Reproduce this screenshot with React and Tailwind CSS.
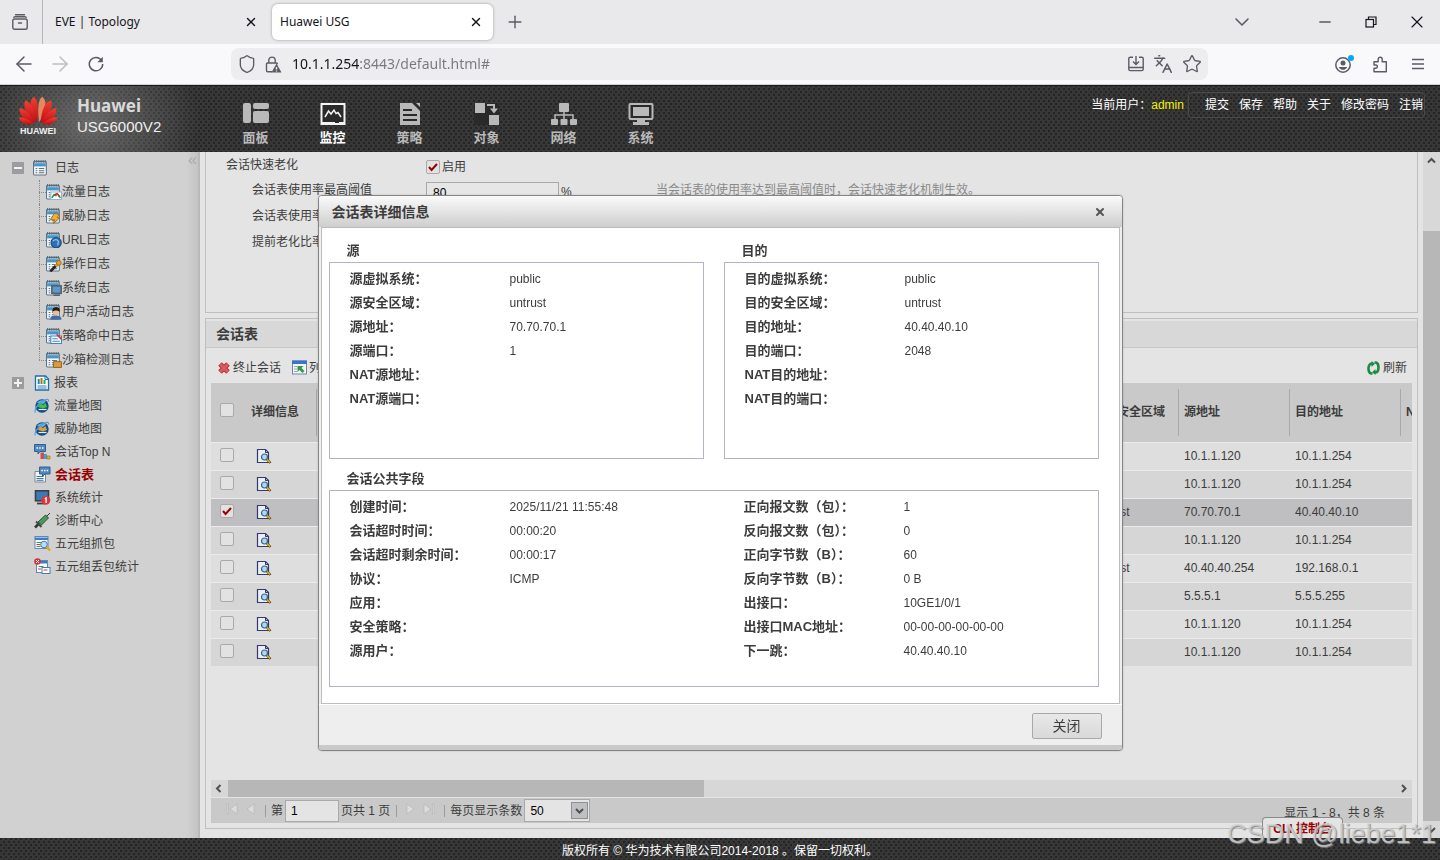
/**
 * App.jsx
 * Huawei USG - tabela de sessões com o diálogo de detalhes aberto.
 */
import { useState } from 'react'
import { clsx } from 'clsx'
import {
  ArrowLeft, ArrowRight, ChevronDown, Languages, Menu, Minus, Plus, Shield, Star, X,
} from 'lucide-react'

const DOTS =
  'bg-[#373738] bg-[radial-gradient(circle_at_1px_1px,#242425_1px,transparent_1px),radial-gradient(circle_at_4px_4px,#242425_1px,transparent_1px)] bg-[length:5px_6px]'

const LOG_ITEMS = [
  { label: '流量日志', mark: 'traffic' },
  { label: '威胁日志', mark: 'threat' },
  { label: 'URL日志', mark: 'url' },
  { label: '操作日志', mark: 'tool' },
  { label: '系统日志', mark: 'system' },
  { label: '用户活动日志', mark: 'user' },
  { label: '策略命中日志', mark: 'policy' },
  { label: '沙箱检测日志', mark: 'sandbox' },
]

const MONITOR_ITEMS = [
  { label: '流量地图', Icon: () => <GlobeIcon mark="#3fc43f" /> },
  { label: '威胁地图', Icon: () => <GlobeIcon mark="#e0a030" /> },
  { label: '会话Top N', Icon: TopNIcon },
  { label: '会话表', Icon: SessionIcon, active: true },
  { label: '系统统计', Icon: SysStatIcon },
  { label: '诊断中心', Icon: SyringeIcon },
  { label: '五元组抓包', Icon: CaptureIcon },
  { label: '五元组丢包统计', Icon: DropIcon },
]

const NAV = [
  { label: '面板', Icon: PanelIcon },
  { label: '监控', Icon: MonitorIcon, active: true },
  { label: '策略', Icon: PolicyIcon },
  { label: '对象', Icon: ObjectIcon },
  { label: '网络', Icon: NetworkIcon },
  { label: '系统', Icon: SystemIcon },
]

const SESSIONS = [
  { src: '10.1.1.120', dst: '10.1.1.254' },
  { src: '10.1.1.120', dst: '10.1.1.254' },
  { zone: 'untrust', src: '70.70.70.1', dst: '40.40.40.10', selected: true },
  { src: '10.1.1.120', dst: '10.1.1.254' },
  { zone: 'untrust', src: '40.40.40.254', dst: '192.168.0.1' },
  { src: '5.5.5.1', dst: '5.5.5.255' },
  { src: '10.1.1.120', dst: '10.1.1.254' },
  { src: '10.1.1.120', dst: '10.1.1.254' },
]

const SOURCE = [
  ['源虚拟系统：', 'public'],
  ['源安全区域：', 'untrust'],
  ['源地址：', '70.70.70.1'],
  ['源端口：', '1'],
  ['NAT源地址：', ''],
  ['NAT源端口：', ''],
]

const DESTINATION = [
  ['目的虚拟系统：', 'public'],
  ['目的安全区域：', 'untrust'],
  ['目的地址：', '40.40.40.10'],
  ['目的端口：', '2048'],
  ['NAT目的地址：', ''],
  ['NAT目的端口：', ''],
]

const COMMON_LEFT = [
  ['创建时间：', '2025/11/21 11:55:48'],
  ['会话超时时间：', '00:00:20'],
  ['会话超时剩余时间：', '00:00:17'],
  ['协议：', 'ICMP'],
  ['应用：', ''],
  ['安全策略：', ''],
  ['源用户：', ''],
]

const COMMON_RIGHT = [
  ['正向报文数（包）：', '1'],
  ['反向报文数（包）：', '0'],
  ['正向字节数（B）：', '60'],
  ['反向字节数（B）：', '0 B'],
  ['出接口：', '10GE1/0/1'],
  ['出接口MAC地址：', '00-00-00-00-00-00'],
  ['下一跳：', '40.40.40.10'],
]

export default function App() {
  const [open, setOpen] = useState(true)

  return (
    <div className="flex h-screen flex-col overflow-hidden bg-[#e4e4e4] font-['Liberation_Sans','Noto_Sans_CJK_SC',sans-serif] text-xs text-[#3c3c3c]">
      <TabBar />
      <AddressBar />
      <Header />
      <div className="flex min-h-0 flex-1">
        <Sidebar />
        <main className="flex min-w-0 flex-1 flex-col gap-[5px] px-[5px] pb-[9px]">
          <AgingPanel />
          <SessionPanel />
        </main>
        <PageScrollbar />
      </div>
      <footer className={clsx('relative flex h-[22px] shrink-0 items-center justify-center pt-1 text-white', DOTS)}>
        版权所有 © 华为技术有限公司2014-2018 。保留一切权利。
        <button className="absolute right-[97px] bottom-full h-[21px] rounded-t border border-b-0 border-[#8a8a8a] bg-[#e4e4e4] px-2.5 pt-0.5 font-bold text-[#990000]">
          CLI 控制台
        </button>
        <span className="absolute right-1 bottom-[10px] text-[27px] leading-8 whitespace-nowrap text-[#d4d4d4]/80 [text-shadow:1px_1px_1px_#888]">
          CSDN @liebe1*1
        </span>
      </footer>
      {open && <SessionDialog onClose={() => setOpen(false)} />}
    </div>
  )
}

/* ---------- Navegador ---------- */

function TabBar() {
  return (
    <div className="flex h-11 shrink-0 items-center bg-[#e9e9eb] font-['Noto_Sans','Noto_Sans_CJK_SC',sans-serif] text-[#15141a]">
      <button className="flex h-full w-[43px] items-center justify-center border-r border-[#b5b5b8] pr-0.5" aria-label="View">
        <svg width="16" height="16" viewBox="0 0 16 16" fill="none" stroke="#5b5b66" strokeWidth="1.4" strokeLinecap="round">
          <path d="M3.5 .8h9M1.800 3.200c.5-.4 1-.5 1.700-.5h9c.7 0 1.200.1 1.700.5" />
          <rect x=".8" y="5" width="14.400" height="10.200" rx="1.800" />
          <path d="M6.500 9h3" />
        </svg>
      </button>
      <div className="flex w-[229px] items-center justify-between pr-3.5 pl-3">
        <span>EVE | Topology</span>
        <button aria-label="Close"><X size={14} strokeWidth={2.4} /></button>
      </div>
      <div className="flex h-9 w-[221px] items-center justify-between rounded-md bg-white pr-2.5 pl-2 shadow-[0_0_3px_rgba(0,0,0,0.35)]">
        <span>Huawei USG</span>
        <button aria-label="Close"><X size={14} strokeWidth={2.4} /></button>
      </div>
      <button className="ml-3 text-[#5b5b66]" aria-label="New"><Plus size={20} strokeWidth={1.7} /></button>
      <div className="ml-auto flex items-center pr-[13px]">
        <button className="mr-[62px] text-[#5b5b66]" aria-label="List"><ChevronDown size={24} strokeWidth={1.6} /></button>
        <button className="mr-[31px]" aria-label="Minimize"><Minus size={18} strokeWidth={1.5} /></button>
        <button className="mr-[30px]" aria-label="Restore">
          <svg width="12" height="12" viewBox="0 0 12 12" fill="none" stroke="#15141a" strokeWidth="1.200">
            <rect x="1" y="3.500" width="7.500" height="7.500" />
            <path d="M3.500 3.500V1H11v7.500H8.500" />
          </svg>
        </button>
        <button aria-label="Exit"><X size={20} strokeWidth={1.400} /></button>
      </div>
    </div>
  )
}

function AddressBar() {
  const [url, setUrl] = useState('10.1.1.254:8443/default.html#')

  return (
    <div className="flex h-[41px] shrink-0 items-center border-b border-[#cfd0d3] bg-[#f9f9fb] pl-3 text-[#5b5b66]">
      <button className="mr-3" aria-label="Back"><ArrowLeft size={24} strokeWidth={1.500} /></button>
      <button className="mr-4 text-[#bdbdc2]" aria-label="Forward"><ArrowRight size={24} strokeWidth={1.500} /></button>
      <button aria-label="Reload">
        <svg width="16" height="16" viewBox="0 0 16 16" fill="none" stroke="currentColor" strokeWidth="1.500">
          <path d="M13.600 4.400A6.700 6.700 0 1 0 14.700 8" />
          <path d="M14.800.8v5.400H9.400z" fill="currentColor" stroke="none" />
        </svg>
      </button>
      <div className="ml-[127px] flex h-8 min-w-0 flex-1 items-center rounded-lg bg-[#ededf0] px-1.5">
        <Shield size={20} strokeWidth={1.600} />
        <svg className="ml-2" width="17" height="17" viewBox="0 0 17 17" fill="none" stroke="currentColor" strokeWidth="1.400">
          <path d="M3.800 7V4.300a3.200 3.200 0 0 1 6.400 0V7M12.500 8.200c0-.7-.5-1.200-1.200-1.200H2.700c-.7 0-1.200.5-1.200 1.200v6.300c0 .7.5 1.200 1.200 1.200H7" />
          <path d="M11.500 7.500l5 9h-10z" fill="currentColor" stroke="none" />
          <path d="M11.500 11v2.600M11.500 14.400v1" stroke="#ededf0" />
        </svg>
        {/* host escuro, resto do endereço cinza */}
        <input
          aria-label="URL"
          value={url}
          onChange={(e) => setUrl(e.target.value)}
          className="ml-2.5 min-w-0 flex-1 bg-linear-to-r from-[#15141a] from-[68px] to-[#77777d] to-[68px] bg-clip-text font-['Noto_Sans',sans-serif] text-sm text-transparent outline-none"
        />
        <div className="flex items-center gap-[9px]">
          <svg width="16" height="16" viewBox="0 0 16 16" fill="none" stroke="currentColor" strokeWidth="1.400">
            <path d="M5 1.200H2.200C1.400 1.200.8 1.800.8 2.600v10.600c0 .8.600 1.400 1.400 1.400h11.600c.8 0 1.400-.6 1.400-1.400V2.600c0-.8-.6-1.400-1.400-1.400H11M.8 11.500h14.400M8 0v8M5 5.400l3 3 3-3" />
          </svg>
          <Languages size={20} strokeWidth={1.800} />
          <Star size={20} strokeWidth={1.600} />
        </div>
      </div>
      <div className="flex items-center gap-[18px] pr-2.5 pl-[127px]">
        <svg width="20" height="18" viewBox="0 0 20 18" fill="none">
          <circle cx="8" cy="10" r="7.200" stroke="#5b5b66" strokeWidth="1.500" />
          <circle cx="8" cy="8" r="2.500" fill="#5b5b66" />
          <path d="M3.800 12h8.400c-.8 1.900-2.300 2.800-4.200 2.800S4.600 13.900 3.800 12z" fill="#5b5b66" />
          <circle cx="16" cy="3" r="3" fill="#00a8ff" />
        </svg>
        <svg width="15" height="17" viewBox="0 0 15 17" fill="none" stroke="#5b5b66" strokeWidth="1.400" strokeLinejoin="round">
          <path d="M1 5.800h4.200V3.200a2 2 0 0 1 4 0v2.600h4.100v10H1v-3.600h1.800a1.600 1.600 0 0 0 0-3.200H1z" />
        </svg>
        <svg width="24" height="16" viewBox="0 0 24 16" stroke="#5b5b66" strokeWidth="1.300">
          <path d="M6 3.500h12M6 8h12M6 12.500h12" />
        </svg>
      </div>
    </div>
  )
}

/* ---------- Cabeçalho ---------- */

function Header() {
  return (
    <header className={clsx('shrink-0', DOTS)}>
      <div className="flex h-[67px] items-start border-t border-[#1b1b1c] bg-[radial-gradient(ellipse_110px_90px_at_90px_36px,rgba(160,160,160,0.5),transparent)]">
        <HuaweiLogo />
        <div className="ml-[18px] w-[140px] pt-[9px]">
          <div className="font-['Noto_Sans',sans-serif] text-[17px] leading-[22px] font-bold text-[#d9d9d9]">Huawei</div>
          <div className="text-[15px] leading-5 text-[#efefef]">USG6000V2</div>
        </div>
        <nav className="flex">
          {NAV.map(({ label, Icon, active }) => (
            <a
              key={label}
              href="#"
              className={clsx(
                'flex w-[77px] flex-col items-center pt-4 text-[13px] font-bold',
                active ? 'text-white' : 'text-[#b9b9b9]'
              )}
            >
              <Icon />
              <span className="mt-0.5 leading-5">{label}</span>
            </a>
          ))}
        </nav>
        <div className="mt-1.5 mr-[15px] ml-auto flex h-[26px] items-center text-white">
          <span>当前用户：</span>
          <span className="mr-1 text-[#f0f000]">admin</span>
          <div className="flex h-full items-center gap-2.5 rounded-sm border border-[#4a4a4b] pr-px pl-4">
            {['提交', '保存', '帮助', '关于', '修改密码', '注销'].map((item) => (
              <a key={item} href="#">{item}</a>
            ))}
          </div>
        </div>
      </div>
    </header>
  )
}

function HuaweiLogo() {
  return (
    <div className="ml-[17px] flex w-[42px] flex-col items-center pt-2.5">
      <svg width="40" height="29" viewBox="0 0 40 29">
        <defs>
          <linearGradient id="petal" x1="0" y1="0" x2="0" y2="1">
            <stop offset="0" stopColor="#f04030" />
            <stop offset="1" stopColor="#c00d18" />
          </linearGradient>
        </defs>
        <g fill="url(#petal)">
          <path d="M19 26C12 17 10 6 15.500.8 20 2 20.500 14 19 26z" />
          <path d="M21 26C28 17 30 6 24.500.8 20 2 19.500 14 21 26z" fill="#e8865c" />
          <path d="M17.500 26.500C9 21 4.500 11.500 7 4.600 13 5 16.500 15 17.500 26.500z" />
          <path d="M22.500 26.500C31 21 35.500 11.500 33 4.600 27 5 23.500 15 22.500 26.500z" />
          <path d="M16.500 27C8 26 1 20.500 1.500 12 8 13 13.500 19.500 16.500 27z" />
          <path d="M23.500 27C32 26 39 20.500 38.500 12 32 13 26.500 19.500 23.500 27z" />
          <path d="M15.500 27.800C8 30 3 27.500.5 21.500 6.500 21 11 23.500 15.500 27.800z" />
          <path d="M24.500 27.800C32 30 37 27.500 39.500 21.500 33.500 21 29 23.500 24.500 27.800z" />
        </g>
      </svg>
      <span className="text-[9px] leading-3 font-bold text-[#eee]">HUAWEI</span>
    </div>
  )
}

function PanelIcon() {
  return (
    <svg width="26" height="24" viewBox="0 0 26 24" fill="#b9b9b9">
      <rect y="1" width="8" height="20" rx="2" />
      <rect x="10" y="1" width="16" height="6" rx="2" />
      <rect x="10" y="9" width="16" height="12" rx="2" />
    </svg>
  )
}

function MonitorIcon() {
  return (
    <svg width="26" height="24" viewBox="0 0 26 24">
      <rect x="1.500" y="2" width="23" height="20" fill="#2a2a2b" stroke="#f4f4f4" strokeWidth="2" />
      <path d="M1 20h14v1.500h4V20h6v3H1z" fill="#f4f4f4" />
      <path d="M5 15l3.500-6 2.500 3 3-4 2 3.500 2-1 3 4.500" fill="none" stroke="#f4f4f4" strokeWidth="1.500" />
    </svg>
  )
}

function PolicyIcon() {
  return (
    <svg width="22" height="24" viewBox="0 0 22 24">
      <path d="M1 1h12l8 8v14H1z" fill="#b9b9b9" />
      <path d="M14.500 1H21v6.500z" fill="#2a2a2b" />
      <path d="M17 1h4v4z" fill="#b9b9b9" />
      <path d="M4 8h9M4 13h14M4 18h14" stroke="#2a2a2b" strokeWidth="2" />
    </svg>
  )
}

function ObjectIcon() {
  return (
    <svg width="25" height="24" viewBox="0 0 25 24">
      <rect y="1" width="25" height="22" fill="#2a2a2b" />
      <path d="M1 1h10v10H1zM15 13h10v10H15z" fill="#b9b9b9" />
      <path d="M13 3h7v5" fill="none" stroke="#b9b9b9" strokeWidth="2" />
      <path d="M16 6.500h8l-4 5z" fill="#b9b9b9" />
    </svg>
  )
}

function NetworkIcon() {
  return (
    <svg width="26" height="24" viewBox="0 0 26 24">
      <path d="M13 9v8M4 17v-4h18v4" fill="none" stroke="#b9b9b9" strokeWidth="1.500" />
      <g fill="#b9b9b9">
        <rect x="8" y="1" width="10" height="9" rx="1" />
        <rect y="17" width="7" height="6" rx="1" />
        <rect x="9.500" y="17" width="7" height="6" rx="1" />
        <rect x="19" y="17" width="7" height="6" rx="1" />
      </g>
    </svg>
  )
}

function SystemIcon() {
  return (
    <svg width="26" height="24" viewBox="0 0 26 24">
      <rect x="1.500" y="2" width="23" height="15" rx="1" fill="#2a2a2b" stroke="#b9b9b9" strokeWidth="2" />
      <rect x="5" y="5" width="16" height="9" fill="#b9b9b9" />
      <path d="M9 17h8v3h4v3H5v-3h4z" fill="#b9b9b9" />
    </svg>
  )
}

/* ---------- Menu lateral ---------- */

function Sidebar() {
  return (
    <aside className="relative w-[200px] shrink-0 border-r-2 border-[#b9b9b9] bg-linear-to-r from-[#d1d1d1] from-94% to-[#c4c4c4] pt-1">
      <button className="absolute top-0 right-0 px-px text-base leading-4 text-[#aaa]" aria-label="Collapse">«</button>
      <div className="flex h-6 items-center pl-3">
        <Toggle open />
        <span className="ml-[9px]"><LogIcon /></span>
        <a href="#" className="ml-1.5">日志</a>
      </div>
      <ul className="ml-[39px]">
        {LOG_ITEMS.map(({ label, mark }, i) => (
          <li key={label} className="relative flex h-6 items-center">
            <span
              className={clsx(
                'absolute top-0 left-0 w-[7px] border-l border-dotted border-[#888]',
                i === LOG_ITEMS.length - 1 ? 'h-3' : 'h-6'
              )}
            />
            <span className="w-[7px] border-t border-dotted border-[#888]" />
            <LogIcon mark={mark} />
            <a href="#">{label}</a>
          </li>
        ))}
      </ul>
      <div className="flex h-[22px] items-center pl-3">
        <Toggle />
        <span className="ml-[10px]"><ReportIcon /></span>
        <a href="#" className="ml-1">报表</a>
      </div>
      <ul className="pl-[34px]">
        {MONITOR_ITEMS.map(({ label, Icon, active }) => (
          <li key={label} className="flex h-[23px] items-center gap-1">
            <Icon />
            <a href="#" className={clsx(active && 'text-[13px] font-bold text-[#990000]')}>{label}</a>
          </li>
        ))}
      </ul>
    </aside>
  )
}

function Toggle({ open }) {
  return (
    <button aria-label="Toggle">
      <svg className="block" width="12" height="12" viewBox="0 0 12 12">
        <rect width="12" height="12" fill="#9a9c9f" />
        <path d={open ? 'M2 6h8' : 'M2 6h8M6 2v8'} stroke="#f2f2f2" strokeWidth="2" />
      </svg>
    </button>
  )
}

function LogIcon({ mark }) {
  return (
    <svg width="16" height="16" viewBox="1 1 15 15">
      <rect x="1.500" y="2.500" width="12" height="12.500" rx=".8" fill="#f4f6f8" stroke="#5f7386" />
      <rect x="2" y="4" width="11" height="3" fill="#4596cc" />
      <path d="M2.500 1v2.500M4.500 1v2.500M6.500 1v2.500M8.500 1v2.500M10.500 1v2.500M12.500 1v2.500" stroke="#5b6670" />
      <path d="M3.500 9H5M6.500 9h5M3.500 11H5M6.500 11h5M3.500 13H5M6.500 13h5" stroke="#62727f" />
      {mark === 'traffic' && (
        <>
          <path d="M5.500 8.500h10v7h-10z" fill="#fff" stroke="#8fb4dc" />
          <path d="M6.500 14l2-3 2.500 1M13 12l1.500 2" fill="none" stroke="#1d9a3a" strokeWidth="1.500" />
          <path d="M9 11l2.500-1 2 2.500" fill="none" stroke="#d42020" strokeWidth="1.500" />
        </>
      )}
      {mark === 'threat' && (
        <path d="M9 6l4.500 1-2 3h2.500l-6 5.500 1-3.500H5z" fill="#f0b030" stroke="#9a6412" strokeWidth=".8" />
      )}
      {mark === 'url' && (
        <>
          <circle cx="10.500" cy="11" r="4.800" fill="#2f6fb2" stroke="#1d4a80" />
          <path d="M7.500 9.500c2-2 4-1.500 5 0s-1 2-.5 4" fill="none" stroke="#8cc0ee" strokeWidth="1.300" />
        </>
      )}
      {mark === 'tool' && (
        <>
          <path d="M5 15.500l6-6" stroke="#26262a" strokeWidth="2.500" />
          <path d="M10 10.500l3.500-3.500" stroke="#e2a32a" strokeWidth="3" />
          <circle cx="13" cy="7.500" r="2.300" fill="#e2a32a" stroke="#8f5f10" strokeWidth=".7" />
        </>
      )}
      {mark === 'system' && (
        <>
          <rect x="6.500" y="6.500" width="8.700" height="7" fill="#5b9ad0" stroke="#55606b" strokeWidth="1.500" />
          <path d="M8 15.300h6" stroke="#55606b" strokeWidth="1.400" />
        </>
      )}
      {mark === 'user' && (
        <>
          <path d="M5 15.800c0-3.300 2-4 5-4s5.500.7 5.500 4z" fill="#3c6fa8" />
          <circle cx="10.300" cy="8.500" r="3" fill="#f0bd8e" />
          <path d="M7 8.500C6.500 5 8.500 4 10.500 4s4 1 3.200 4.500c-1-1.500-4.500-2-6.700 0z" fill="#22190f" />
        </>
      )}
      {mark === 'policy' && (
        <>
          <path d="M5.500 8.500h10v7h-10z" fill="#fff" stroke="#3d82c4" />
          <path d="M7 11h5M7 13.500h7" stroke="#3d82c4" />
          <path d="M11 7l4.500 4.500" stroke="#d63333" strokeWidth="1.500" />
        </>
      )}
      {mark === 'sandbox' && (
        <path d="M8 10h7.500v5.500H8z" fill="#dc9a3a" stroke="#8f5c14" strokeWidth=".8" />
      )}
    </svg>
  )
}

function ReportIcon() {
  return (
    <svg width="16" height="16" viewBox="0 0 16 16">
      <path d="M1.500 1h10L14.500 4v11h-13z" fill="#fff" stroke="#1e6fae" strokeWidth="1.300" />
      <path d="M11 1v3.500h3.500" fill="none" stroke="#1e6fae" />
      <path d="M4.700 4v5" stroke="#2c7ec2" strokeWidth="2" />
      <path d="M7.500 3v6" stroke="#a07a12" strokeWidth="2" />
      <path d="M10.500 5v4" stroke="#2aa84e" strokeWidth="2" />
      <path d="M3.500 11h9M3.500 13h9" stroke="#2c7ec2" />
    </svg>
  )
}

function GlobeIcon({ mark }) {
  return (
    <svg width="16" height="16" viewBox="0 0 16 16">
      <circle cx="8" cy="8" r="6.700" fill="#124a8c" />
      <path d="M3 5c2-3 6-3.500 9-1.500L9 6z" fill="#5fb4ea" />
      <path d="M1.500 14.500C0 12.500 3 6.500 8 3.500s7-2.500 6.500 0" fill="none" stroke="#4f9fe0" strokeWidth="1.200" />
      <path d="M4 9l2-4 3 2 2.500-2 1.500 4-4 1.500z" fill={mark} />
      <path d="M4.500 11.500h8" stroke="#dff2df" strokeWidth="1.200" />
    </svg>
  )
}

function TopNIcon() {
  return (
    <svg width="17" height="17" viewBox="0 0 17 17">
      <path d="M.5 1.500h11v7H6l-2 2.500V8.500H.5z" fill="#4f87c4" stroke="#33608f" />
      <path d="M2.500 5h1.500M5.200 5h1.500M8 5h1.500" stroke="#fff" strokeWidth="1.600" />
      <path d="M6.500 9.500h3.500v6.500H6.500z" fill="#d84a4a" />
      <path d="M10 11h3v5h-3z" fill="#3fa0e0" />
      <path d="M13 13h3v3h-3z" fill="#e8b52a" stroke="#94690c" strokeWidth=".6" />
    </svg>
  )
}

function SessionIcon() {
  return (
    <svg width="17" height="17" viewBox="0 0 17 17">
      <path d="M1 5.500h10.500V16H1z" fill="#f3f5f7" stroke="#7e8a96" />
      <path d="M2.500 10.500h7M2.500 12.500h7M2.500 14.300h7" stroke="#3f7d9a" />
      <path d="M5.500 1h10.500v7h-5l-2.500 2.500V8h-3z" fill="#4f87c4" stroke="#33608f" />
      <path d="M7.300 4.500h1.500M10 4.500h1.500M12.700 4.500h1.500" stroke="#fff" strokeWidth="1.600" />
    </svg>
  )
}

function SysStatIcon() {
  return (
    <svg width="17" height="17" viewBox="0 0 17 17">
      <rect x="1.500" y="1.800" width="13" height="10" fill="#3b79b8" stroke="#3d4043" strokeWidth="1.600" />
      <path d="M3 14.500h8" stroke="#3d4043" strokeWidth="1.800" />
      <circle cx="11.800" cy="11.300" r="4.500" fill="#d8383c" />
      <path d="M10.800 9.800l1.300-.8v5" fill="none" stroke="#fff" strokeWidth="1.300" />
    </svg>
  )
}

function SyringeIcon() {
  return (
    <svg width="17" height="17" viewBox="0 0 17 17">
      <path d="M1 15.500l4-4" stroke="#333" strokeWidth="2.500" />
      <path d="M2 9.500l5.500 5.500" stroke="#3f4a44" strokeWidth="1.800" />
      <path d="M4 10l7.500-7 3 3-7 7z" fill="#4a9a5a" stroke="#22462c" strokeWidth=".9" />
      <path d="M12.500 4.500l3.500-3.500" stroke="#333" />
    </svg>
  )
}

function CaptureIcon() {
  return (
    <svg width="17" height="17" viewBox="0 0 17 17">
      <rect x="1" y="1.500" width="13" height="12" fill="#fff" stroke="#5f88b8" />
      <path d="M1 2.500h13v2.500H1z" fill="#3f7cc0" />
      <path d="M2.500 7.500h5M2.500 11.500h4" stroke="#3a9a50" />
      <path d="M2.500 9.500h4" stroke="#cc3a3a" />
      <circle cx="10" cy="9.500" r="3.300" fill="#b9def7" stroke="#4878a8" />
      <path d="M12.500 12l3.500 3.500" stroke="#e0a420" strokeWidth="2.200" />
    </svg>
  )
}

function DropIcon() {
  return (
    <svg width="17" height="17" viewBox="0 0 17 17">
      <rect x="2.500" y="2.500" width="11" height="12" fill="#fff" stroke="#5f88b8" />
      <path d="M3 3h10v2.500H3z" fill="#3f7cc0" />
      <path d="M4.500 8.500h5" stroke="#3a9a50" />
      <path d="M4 11h3" stroke="#cc3a3a" />
      <rect x="8" y="9.500" width="8" height="6" fill="#fff" stroke="#3f7cc0" />
      <path d="M9.500 12h4" stroke="#cc3a3a" />
      <circle cx="3.500" cy="3.500" r="3.300" fill="#cf3438" />
      <path d="M2 2l3 3M5 2l-3 3" stroke="#fff" />
    </svg>
  )
}

/* ---------- Conteúdo ---------- */

function CheckBox({ label, checked, onChange }) {
  return (
    <span className="relative block size-3.5">
      <input
        type="checkbox"
        aria-label={label}
        checked={checked}
        onChange={onChange}
        className="block size-3.5 appearance-none rounded-xs border border-[#a9a9ab] bg-[#e2e2e2]"
      />
      {checked && (
        <svg className="pointer-events-none absolute inset-0" width="14" height="14" viewBox="0 0 14 14" fill="none">
          <path d="M3 7l2.600 3L11 4" stroke="#990000" strokeWidth="2" />
        </svg>
      )}
    </span>
  )
}

function AgingPanel() {
  const [enabled, setEnabled] = useState(true)
  const [threshold, setThreshold] = useState('80')

  return (
    <section className="shrink-0 border border-t-0 border-[#bfbfbf] pb-[57px] pl-5">
      <div className="flex h-[25px] items-center">
        <span className="w-[200px]">会话快速老化</span>
        <label className="flex items-center gap-0.5 pt-1">
          <CheckBox label="启用" checked={enabled} onChange={() => setEnabled(!enabled)} />
          启用
        </label>
      </div>
      <div className="flex h-[26px] items-center">
        <label htmlFor="threshold" className="w-[200px] pl-[26px]">会话表使用率最高阈值</label>
        <input
          id="threshold"
          value={threshold}
          onChange={(e) => setThreshold(e.target.value)}
          className="mt-1.5 h-[22px] w-[133px] border border-[#a9a9ab] bg-[#e6e6e6] px-1.5 text-black"
        />
        <span className="ml-0.5 w-[95px] pt-1">%</span>
        <span className="text-[#8a8a8a]">当会话表的使用率达到最高阈值时，会话快速老化机制生效。</span>
      </div>
      <div className="flex h-[26px] items-center pl-[26px]">会话表使用率</div>
      <div className="flex h-[26px] items-center pl-[26px]">提前老化比率</div>
    </section>
  )
}

function SessionPanel() {
  const [selected, setSelected] = useState(SESSIONS.map((s) => Boolean(s.selected)))
  const toggle = (i) => setSelected(selected.map((v, j) => (j === i ? !v : v)))

  return (
    <section className="flex min-h-0 flex-1 flex-col border border-[#bfbfbf] pt-0.5 pb-[5px]">
      <h2 className="flex h-[27px] shrink-0 items-center border-b border-[#c8c8c8] bg-[#d8d8d8] pl-2.5 text-sm font-bold">会话表</h2>
      <div className="flex h-[35px] shrink-0 items-center pt-1 pr-2.5 pl-[11px]">
        <button className="flex items-center gap-0.5">
          <svg width="14" height="14" viewBox="0 0 14 14">
            <path d="M3 3l8 8M11 3l-8 8" stroke="#a83238" strokeWidth="5" />
            <path d="M3 3l8 8M11 3l-8 8" stroke="#dd5a5e" strokeWidth="3" />
          </svg>
          终止会话
        </button>
        <button className="ml-[11px] flex items-center gap-0.5">
          <svg width="15" height="15" viewBox="0 0 15 15">
            <rect x=".5" y="1" width="14" height="13" fill="#f5f5f5" stroke="#6f87a4" />
            <path d="M0 .5h15V4H0z" fill="#3c74c8" />
            <path d="M2 6.500h3M2 9h3M2 11.500h3" stroke="#9aa6b4" />
            <path d="M5.500 6h6l-2 2 3 3-2 2-3-3-2 2z" fill="#2f9a48" />
          </svg>
          列
        </button>
        <button className="ml-auto flex items-center gap-[3px]">
          <svg width="13" height="14" viewBox="0 0 13 14" fill="none" stroke="#1f8a45">
            <path d="M5.500 12.500H4C2 12 1.500 10 1.500 7.500S2.500 2.500 5 2.500" strokeWidth="2.600" />
            <path d="M7.500 1.500H9c2 .5 2.500 2.500 2.500 5s-1 5-3.500 5" strokeWidth="2.600" />
            <path d="M4.500 0L8 2.800 4.500 6zM8.500 8L5 11.200 8.500 14z" fill="#1f8a45" stroke="none" />
          </svg>
          刷新
        </button>
      </div>
      <div className="mx-[5px] min-h-0 flex-1 overflow-hidden">
        <table className="w-full table-fixed border-collapse text-left">
          <colgroup>
            <col className="w-[33px]" />
            <col className="w-[73px]" />
            <col />
            <col className="w-[91px]" />
            <col className="w-[111px]" />
            <col className="w-[111px]" />
            <col className="w-[11px]" />
          </colgroup>
          <thead>
            <tr className="h-[59px] bg-[#c9c9c9]">
              <th className="p-0 pb-1 pl-[9px]"><CheckBox label="全选" checked={false} onChange={() => {}} /></th>
              <HeadCell pad="pl-[7px]">详细信息</HeadCell>
              <HeadCell />
              <HeadCell>目的安全区域</HeadCell>
              <HeadCell>源地址</HeadCell>
              <HeadCell>目的地址</HeadCell>
              <th className="overflow-hidden p-0 pl-[5px]">N</th>
            </tr>
          </thead>
          <tbody>
            {SESSIONS.map((row, i) => (
              <tr
                key={i}
                className={clsx(
                  'h-7 border-t border-[#ebebeb]',
                  selected[i] ? 'bg-[#bfbfc2]' : i % 2 ? 'bg-[#d6d6d6]' : 'bg-[#dedede]'
                )}
              >
                <td className="p-0 pb-0.5 pl-[9px]">
                  <CheckBox label="选择" checked={selected[i]} onChange={() => toggle(i)} />
                </td>
                <td className="p-0 pl-3">
                  <button className="block" aria-label="详细信息"><DetailIcon /></button>
                </td>
                <td className="p-0" />
                <td className="p-0 pl-[5px]">{row.zone}</td>
                <td className="p-0 pl-[5px]">{row.src}</td>
                <td className="p-0 pl-[5px]">{row.dst}</td>
                <td className="p-0" />
              </tr>
            ))}
          </tbody>
        </table>
      </div>
      <div className="mx-[5px] flex h-[17px] shrink-0 items-center bg-[#d7d7d7]">
        <span className="flex w-[17px] justify-center"><Arrow d="M5.500 1L2 4.500 5.500 8" /></span>
        <span className="h-full w-[476px] bg-[#b7b7b7]" />
        <span className="ml-auto flex w-[17px] justify-center"><Arrow d="M3 1l3.500 3.500L3 8" /></span>
      </div>
      <Pager />
    </section>
  )
}

function HeadCell({ children, pad = 'pl-[5px]' }) {
  return (
    <th className="p-0">
      <div className={clsx('flex h-[47px] items-center border-r border-[#a9a9a9] whitespace-nowrap', pad)}>{children}</div>
    </th>
  )
}

function DetailIcon() {
  return (
    <svg width="16" height="16" viewBox="0 0 16 16">
      <path d="M1.500 1.500h8l3 3v10h-11z" fill="#eceef5" stroke="#353a68" strokeWidth="1.200" />
      <path d="M9.500 1.500v3h3" fill="none" stroke="#353a68" />
      <circle cx="8.500" cy="9" r="3" fill="#a8dcf5" stroke="#3c6288" strokeWidth="1.200" />
      <path d="M11 11.500l3.500 3.500" stroke="#5e430e" strokeWidth="2.400" />
      <path d="M11 11.500l3 3" stroke="#e8ae22" strokeWidth="1.400" />
    </svg>
  )
}

function Arrow({ d }) {
  return (
    <svg width="9" height="9" viewBox="0 0 9 9" fill="none" stroke="#505050" strokeWidth="2">
      <path d={d} />
    </svg>
  )
}

function PageButton({ label, children }) {
  return (
    <button aria-label={label} className="mb-1">
      <svg className="block" width="12" height="12" viewBox="0 0 12 12" fill="#dcdcdc" stroke="#b2b2b2" strokeWidth=".6">
        {children}
      </svg>
    </button>
  )
}

function Pager() {
  const [page, setPage] = useState('1')
  const [size, setSize] = useState('50')
  const divider = <span className="h-3 w-px bg-[#9c9c9c]" />

  return (
    <div className="mx-[5px] mt-px flex h-[25px] shrink-0 items-center bg-[#c9c9c9] pr-[27px] pl-[15px] whitespace-nowrap">
      <PageButton label="首页"><path d="M1 1h1.500v10H1zM11 1v10L4 6z" /></PageButton>
      <span className="w-[7px]" />
      <PageButton label="上一页"><path d="M9 1v10L2 6z" /></PageButton>
      <span className="w-2" />
      {divider}
      <label className="ml-[5px] flex items-center gap-0.5">
        第
        <input
          value={page}
          onChange={(e) => setPage(e.target.value)}
          className="h-[22px] w-[54px] border border-[#a9a9ab] bg-[#e4e4e4] px-[5px] text-black"
        />
      </label>
      <span className="mr-1.5 ml-0.5">页共 1 页</span>
      {divider}
      <span className="w-[7px]" />
      <PageButton label="下一页"><path d="M3 1v10l7-5z" /></PageButton>
      <span className="w-[7px]" />
      <PageButton label="末页"><path d="M1 1v10l7-5zM9.500 1H11v10H9.500z" /></PageButton>
      <span className="w-[9px]" />
      {divider}
      <label htmlFor="page-size" className="mr-0.5 ml-[5px]">每页显示条数</label>
      <span className="relative">
        <select
          id="page-size"
          value={size}
          onChange={(e) => setSize(e.target.value)}
          className="block h-[23px] w-[66px] appearance-none border border-[#a9a9ab] bg-[#e4e4e4] px-[5px] text-black"
        >
          <option>50</option>
        </select>
        <span className="pointer-events-none absolute top-[3px] right-0.5 flex h-[17px] w-[17px] items-center justify-center border border-[#8f9095] bg-[#bfc0c2]">
          <Arrow d="M1 3l3.500 3.500L8 3" />
        </span>
      </span>
      <span className="ml-auto pt-1">显示 1 - 8，共 8 条</span>
    </div>
  )
}

function PageScrollbar() {
  return (
    <div className="flex w-[17px] shrink-0 flex-col items-center bg-[#d8d8d8]">
      <span className="flex h-[17px] items-center"><Arrow d="M1 6.500L4.500 3 8 6.500" /></span>
      <span className="mt-[62px] w-full flex-1 bg-[#b7b7b7]" />
      <span className="flex h-[17px] items-center"><Arrow d="M1 3l3.500 3.500L8 3" /></span>
    </div>
  )
}

/* ---------- Diálogo ---------- */

function SessionDialog({ onClose }) {
  return (
    <div className="fixed inset-0 flex items-start justify-center pt-[195px]">
      <div
        role="dialog"
        aria-labelledby="dialog-title"
        className="w-[805px] overflow-hidden rounded border border-[#858585] bg-[#eee] shadow-[0_0_2px_rgba(0,0,0,0.2)]"
      >
        <div className="flex h-[31px] items-center justify-between bg-linear-to-b from-[#fafafa] to-[#cecece] pr-4 pl-[13px]">
          <h1 id="dialog-title" className="text-sm font-bold">会话表详细信息</h1>
          <button onClick={onClose} aria-label="关闭">
            <X size={12} strokeWidth={4} color="#555" />
          </button>
        </div>
        <div className="mx-0.5 border border-[#bdbdbd] bg-white pt-3 pr-5 pb-4 pl-[7px]">
          <div className="grid grid-cols-2 gap-5">
            <FieldSet title="源"><FieldList rows={SOURCE} /></FieldSet>
            <FieldSet title="目的"><FieldList rows={DESTINATION} /></FieldSet>
          </div>
          <div className="mt-[9px]">
            <FieldSet title="会话公共字段">
              <div className="grid grid-cols-2 gap-5">
                <FieldList rows={COMMON_LEFT} />
                <FieldList rows={COMMON_RIGHT} />
              </div>
            </FieldSet>
          </div>
        </div>
        <div className="flex justify-end border-t border-white pt-2 pr-5 pb-1.5">
          <button
            onClick={onClose}
            className="h-[26px] w-[70px] rounded-xs border border-[#a8a8a8] bg-linear-to-b from-[#e8e8e8] to-[#d9d9d9] text-sm"
          >
            关闭
          </button>
        </div>
        <div className="h-[5px] bg-[#c9c9c9]" />
      </div>
    </div>
  )
}

function FieldSet({ title, children }) {
  return (
    <section>
      <h2 className="flex h-[22px] items-center pl-[18px] text-[13px] font-bold">{title}</h2>
      <div className="min-h-[197px] border border-[#b1b4c8] pt-1">{children}</div>
    </section>
  )
}

function FieldList({ rows }) {
  return (
    <dl>
      {rows.map(([label, value]) => (
        <div key={label} className="flex h-6 items-center pl-5">
          <dt className="w-40 text-[13px] font-bold">{label}</dt>
          <dd>{value}</dd>
        </div>
      ))}
    </dl>
  )
}
